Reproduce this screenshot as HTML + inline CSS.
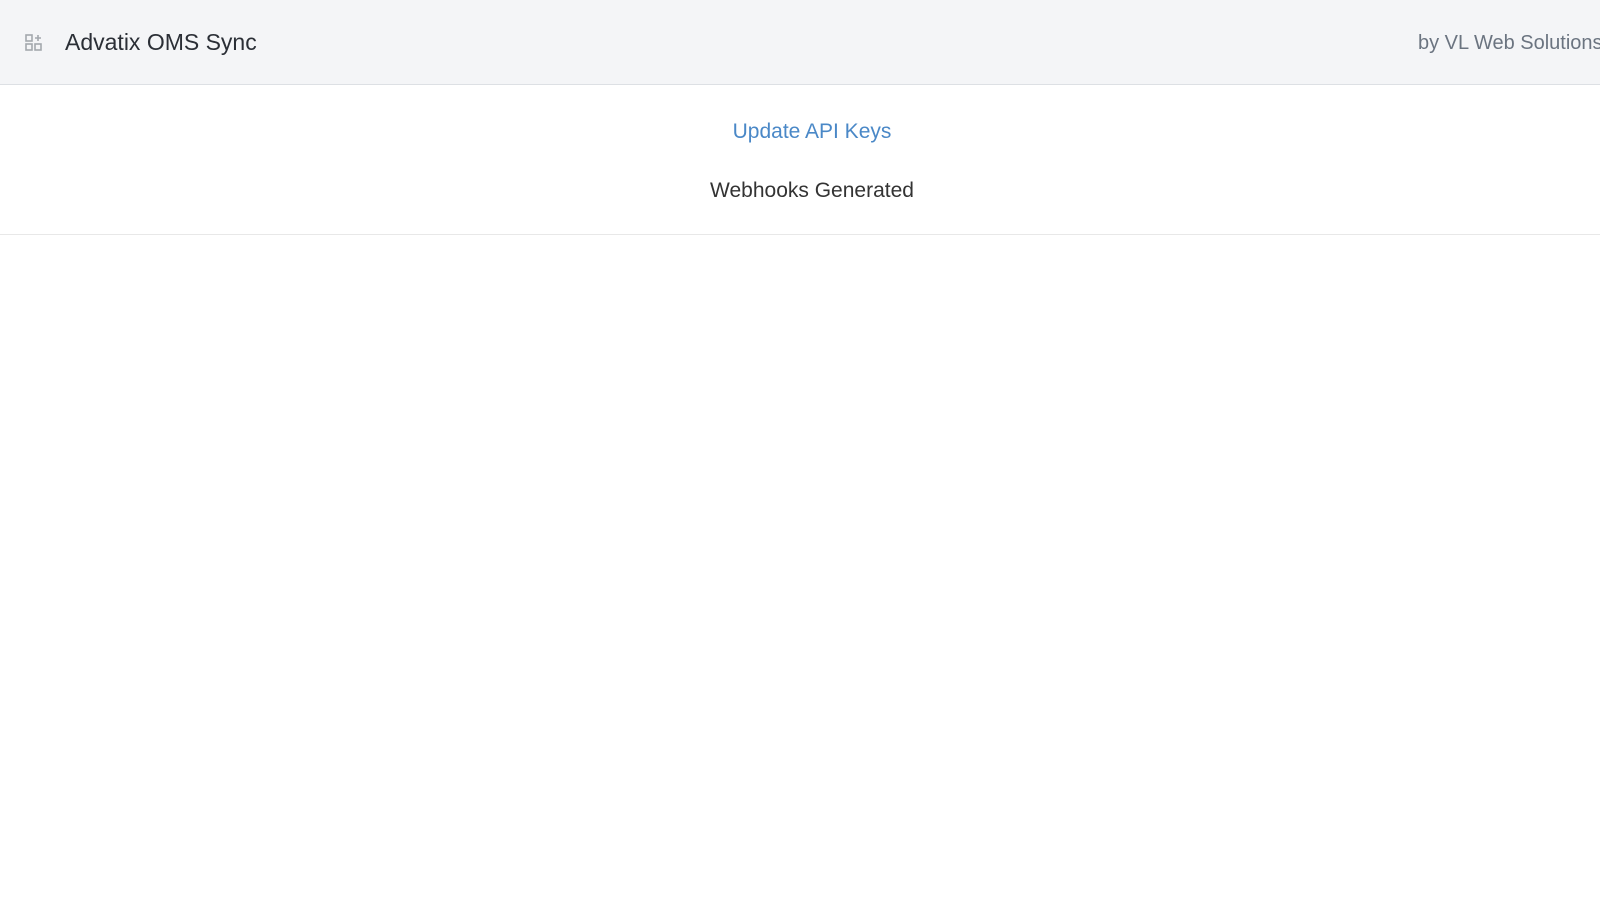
<!DOCTYPE html>
<html><head><meta charset="utf-8"><style>
html,body{margin:0;padding:0;background:#fff;width:1600px;height:900px;overflow:hidden;font-family:"Liberation Sans",sans-serif}
.hdr{position:absolute;left:0;top:0;width:1600px;height:84px;background:#f4f5f7;border-bottom:1px solid #dde0e4;white-space:nowrap;overflow:hidden}
.title{position:absolute;left:65px;top:29px;font-size:23px;color:#2b2f36}
.by{position:absolute;left:1418px;top:32px;font-size:20px;color:#6b7480}
.ic{position:absolute;left:25px;top:34px}
.sec{position:absolute;left:0;top:85px;width:1600px;height:149px;border-bottom:1px solid #e8e8e8}
.a{position:absolute;left:0;width:1624px;text-align:center;font-size:21px}
</style></head><body>
<div class="hdr">
<svg class="ic" width="18" height="17" viewBox="0 0 18 17" fill="none" stroke="#a3a8ad" stroke-width="1.6">
<rect x="1" y="1" width="6" height="6"/><rect x="1" y="10" width="6" height="6"/><rect x="10" y="10" width="6" height="6"/>
<path d="M13 1v6M10 4h6"/></svg>
<div class="title">Advatix OMS Sync</div>
<div class="by">by VL Web Solutions</div>
</div>
<div class="sec">
<div class="a" style="top:35px;color:#4a88c7">Update API Keys</div>
<div class="a" style="top:94px;color:#333">Webhooks Generated</div>
</div>
</body></html>
